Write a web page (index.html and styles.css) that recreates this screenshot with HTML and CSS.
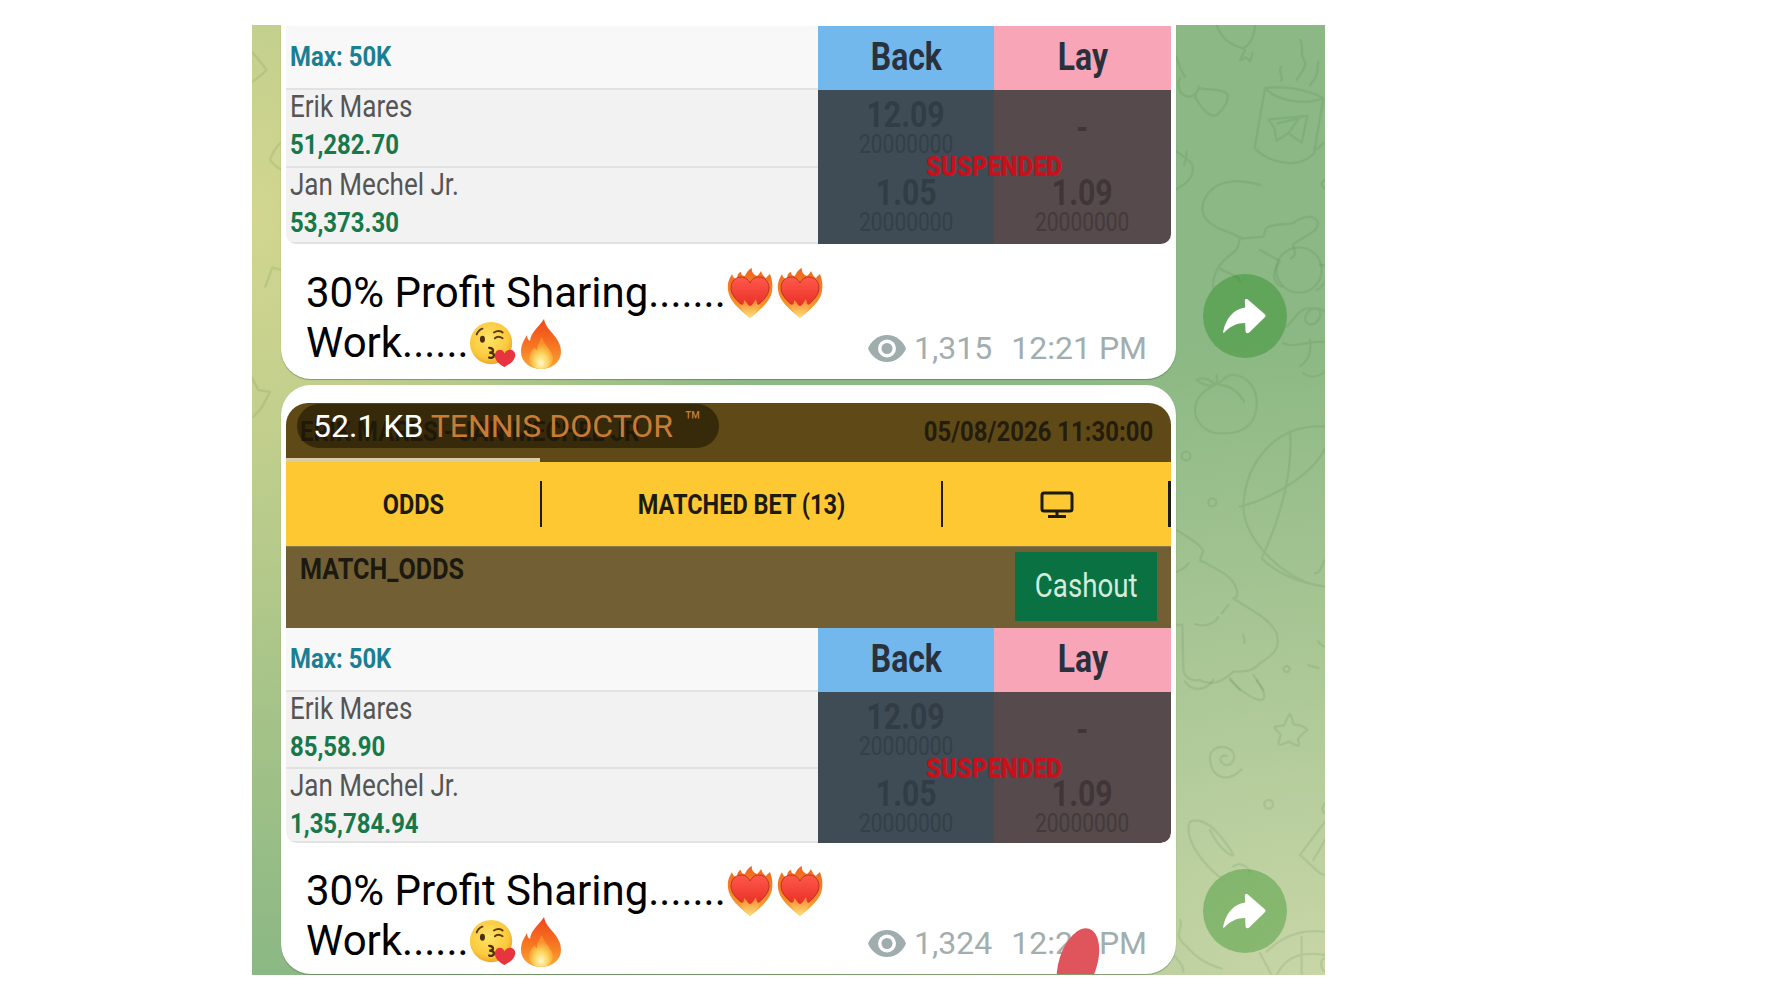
FILE: index.html
```html
<!DOCTYPE html>
<html lang="en">
<head>
<meta charset="utf-8">
<title>Tennis Doctor channel</title>
<link rel="stylesheet" href="styles.css">
</head>
<body>
<svg class="defs" aria-hidden="true">
  <defs>
    <linearGradient id="gFire" x1="0" y1="0" x2="0" y2="1"><stop offset="0" stop-color="#f2641e"/><stop offset=".7" stop-color="#f5902a"/><stop offset="1" stop-color="#fbc845"/></linearGradient>
    <linearGradient id="gHeart" x1="0" y1="0" x2="0" y2="1"><stop offset="0" stop-color="#ff5a4c"/><stop offset="1" stop-color="#e5261f"/></linearGradient>
    <linearGradient id="gCore" x1="0" y1="0" x2="0" y2="1"><stop offset="0" stop-color="#f7812a"/><stop offset="1" stop-color="#fde37a"/></linearGradient>
    <radialGradient id="gFace" cx=".45" cy=".4" r=".65"><stop offset="0" stop-color="#ffe368"/><stop offset=".7" stop-color="#fbc93c"/><stop offset="1" stop-color="#ec9a1d"/></radialGradient>
    <linearGradient id="gFlame" x1="0" y1="0" x2="0" y2="1"><stop offset="0" stop-color="#f0441c"/><stop offset=".6" stop-color="#f77c22"/><stop offset="1" stop-color="#fba834"/></linearGradient>
    <radialGradient id="gFlameCore" cx=".5" cy=".8" r=".6"><stop offset="0" stop-color="#fff7c8"/><stop offset=".5" stop-color="#fdd35a"/><stop offset="1" stop-color="#f8902a"/></radialGradient>
    <symbol id="fireheart" viewBox="0 0 48 50">
      <path fill="url(#gFire)" d="M24 50C14 42 3 33 2 22 1 14 4 10 6 6c1 4 3 5 5 5 0-4 2-7 4-7 0 3 2 4 4 4 1-3 4-7 7-8-1 4 2 7 5 8 2-2 3-3 4-5 1 3 3 6 5 7 1-2 3-3 4-4 2 6 3 10 2 17-1 10-12 19-22 27z"/>
      <path fill="url(#gHeart)" stroke="#a82a1c" stroke-width=".8" d="M24 44C12 34 5 28 5 20c0-7 5-11 10-11 4 0 7 2 9 6 2-4 5-6 9-6 5 0 10 4 10 11 0 8-7 14-19 24z"/>
      <path fill="url(#gCore)" d="M24 50c-4-4-9-8-10-14 3 2 4 0 4-4 3 2 4 6 6 6s4-4 6-7c1 4 1 7 4 5-1 6-6 10-10 14z"/>
    </symbol>
    <symbol id="kiss" viewBox="0 0 50 50">
      <circle cx="23" cy="24" r="22" fill="url(#gFace)"/>
      <path fill="none" stroke="#5a3a10" stroke-width="2" stroke-linecap="round" d="M8 15c1-3 3-5 6-6M26 13c3-2 7-2 9 0M27 19c2-2 5-2 8 0"/>
      <ellipse cx="14" cy="20" rx="2.6" ry="3.6" fill="#4a2f10"/>
      <path fill="none" stroke="#4a2f10" stroke-width="2.4" stroke-linecap="round" d="M21 29c3 0 4 1 4 3s-2 2-4 2c3 0 5 1 5 3s-3 3-5 2"/>
      <path fill="#e8343f" d="M37 49c-6-3-10-7-10-12 0-3 2-6 5-6 2 0 4 1 5 4 1-3 4-4 6-4 3 0 6 3 5 7-1 5-6 8-11 11z"/>
    </symbol>
    <symbol id="flame" viewBox="0 0 42 50">
      <path fill="url(#gFlame)" d="M24 0c1 6 4 9 9 15 5 6 8 11 8 18 0 10-9 17-20 17S1 43 1 33c0-7 3-12 6-17 0 3 1 5 3 6 1-9 8-13 14-22z"/>
      <path fill="url(#gFlameCore)" d="M22 18c1 5 4 7 7 12 3 4 4 7 4 10 0 6-6 10-12 10S9 46 9 40c0-6 3-9 6-12 0 2 1 3 2 3 0-5 3-9 5-13z"/>
    </symbol>
    <symbol id="share" viewBox="155 825 145 125">
      <path fill="#fff" d="M232 834c2 0 4 1 6 3l50 44c3 3 3 6 0 9l-46 45c-5 5-12 6-13-3l-1-25c-26 0-46 10-62 28-3 3-6 2-5-2 8-40 32-68 67-73l-1-20c0-4 2-6 5-6z"/>
    </symbol>
    <symbol id="eye" viewBox="0 0 38 27">
      <path fill="#a0adad" d="M19 0C10 0 3 6 0 13.500 3 21 10 27 19 27s16-6 19-13.500C35 6 28 0 19 0z"/>
      <circle cx="19" cy="13.500" r="9" fill="#fff"/>
      <circle cx="19" cy="13.500" r="5.500" fill="#a0adad"/>
    </symbol>
  </defs>
</svg>

<main class="frame">
  <svg class="doodles" viewBox="252 25 1073 950" aria-hidden="true">
    <g transform="translate(250 20) scale(.3333)">
      <path d="M0 90c20 20 35 40 50 60-15 15-35 30-50 40M90 370c-15 15-25 35-30 50 10 12 25 25 35 30M45 800c10-20 15-40 22-58 10 5 22 8 33 8M5 1070c5 15 15 30 20 40 12 3 25 5 35 5-10 20-20 40-30 55-8 8-14 14-20 20"/>
    </g>
    <g transform="translate(1170 20) scale(.3333)">
      <path d="M140 15c10 30 35 60 80 70 25-15 35-45 35-75M225 90c-5 10-10 20-15 32l18-10 12 12 8-25"/>
      <path d="M20 110c5 25 15 45 25 60M30 175c-10 20-5 50 25 55 20 0 30-15 30-30M90 205c20 5 60 0 80 15 10 15-5 45-30 65-20 10-45-20-60-45-10-15 0-30 10-35M20 395c15 10 30 20 45 35 10 25 0 55-50 80M50 395c0 15-3 28-8 40"/>
      <path d="M285 205c60-10 130 5 175 30l-28 165c-50 50-130 30-178-15zM285 205c40 40 120 50 175 30M460 370c-5 5-15 15-25 20M333 140c-10 20 10 30 0 42M390 60c15 20-5 40 15 65 5 20-15 35-25 55M445 125c-5 25 5 35-25 70"/>
      <path d="M295 298l117-10-17 80-40-28-35 22-8-40zM322 310l65-15-32 45M455 490c5-12 15-10 15-10M455 490c0 10 8 15 15 15"/>
      <path d="M270 495c-50-15-130-25-165 40-30 60 30 90 80 105 25 10 30 20 35 15l60-5 8-25c20-15 50-10 80-15 30-20 60-30 75-5 10 30-55 50-75 70 5 15 15 30-5 40M210 650c-5 30-5 40-30 55-40 30-55 70-50 100M270 690c15 10 40 20 60 35M150 745c15 15 50 15 60 40"/>
      <circle cx="387" cy="750" r="68"/>
      <path d="M325 730c-20 30-15 60 10 70M450 735h15M440 810c15-5 20-20 30-30M350 920c30-30 40-60 80-55 30 0 25 30 5 45-30 15-40-20-15-40 25-10 40 0 45 5M420 960c5 40-5 60-30 80M340 970c30 15 60-5 125-5"/>
    </g>
    <g transform="translate(1170 370) scale(.3333)">
      <path d="M135 45c-30 15-60 35-60 75 0 40 40 75 85 70 40 0 80-10 95-55 10-40 5-80-25-105-20-15-45-20-60-10-8 7-20 18-35 25zM135 45c-15 5-40 0-55-15 15-10 40-5 55 15zM135 45c10-8 5-20 5-30M150 45c30 0 60 25 72 50"/>
      <path d="M400 10c20 15 45 10 65-5M465 170c-150-10-240 110-245 240 0 100 130 230 245 240M210 410c110-30 220-100 255-175M360 185c10 130-30 260-85 380M275 565c30 30 90 70 190 85M465 570c-15 20-10 40-30 40"/>
      <circle cx="48" cy="258" r="13"/><circle cx="127" cy="397" r="12"/><circle cx="350" cy="897" r="9"/>
      <path d="M20 480c30 20 70 40 80 65-10 20-15 30 0 30 40 25 90 40 100 85 5 15 0 25-10 25 50 35 110 60 130 105 15 50-20 70-50 90-20 25-50 25-80 25-30 30-70 45-100 25-20 5-50-5-50-35l-3-130h-20M20 605c15-5 25-10 35-25M75 762c25 10 60 0 70-20M155 730l20-25M220 795c3 10 5 20 3 25M415 885c10 5 20 5 30 10M445 815c5 8 15 15 20 15M180 925l30 35M250 915l30 45"/>
    </g>
    <g transform="translate(1170 680) scale(.3333)">
      <path d="M180 0c30 30 60 55 90 60 25 0 10-30-10-60M45 5c20 30 60 30 85-5"/>
      <path d="M360 102c5 10 10 25 12 32 12 0 30 5 40 15-12 10-22 20-28 28 2 10 5 18 3 20-12 0-25-10-30-12-10 3-25 12-30 8-5-10 5-22 5-30-8-8-18-15-18-22 8-3 20-3 28-5 5-10 12-30 18-34z"/>
      <path d="M215 268c-40 40-90 30-95-30-5-40 50-50 70-20 10 25-15 50-35 30-10-15 5-25 15-20"/>
      <circle cx="296" cy="373" r="13"/>
      <path d="M60 425c40-15 80 20 125 90 20 30-35 0-65-65M60 425c-15 30 10 80 30 105 20 25 40 50 60 60M190 560c15-15 40-5 50 15M465 425l-75 100 60 55 15 5M465 480l-35 60M465 370c-10 10-10 25 0 30M290 815c60-60 120-65 175-60M320 885c30-60 80-70 145-60M395 770v115M270 820l35 65M465 835c-15 0-15 30 0 40M0 820c10 5 40 30 40 55M30 720c10 30-20 40 10 70 20 20 50 60 115 75"/>
    </g>
  </svg>

  <div class="chat">
    <article class="msg">
      <div class="bubble bubble-top">
        <div class="market market-a">
          <div class="cell head-name"><span class="sq sq-l">Max: 50K</span></div>
          <div class="cell head-back"><span class="sq">Back</span></div>
          <div class="cell head-lay"><span class="sq">Lay</span></div>
          <div class="cell runner"><span class="name sq sq-l">Erik Mares</span><span class="pl sq sq-l">51,282.70</span></div>
          <div class="cell odds back"><span class="price sq">12.09</span><span class="size sq">20000000</span></div>
          <div class="cell odds lay"><span class="price dash sq">-</span></div>
          <div class="cell runner"><span class="name sq sq-l">Jan Mechel Jr.</span><span class="pl sq sq-l">53,373.30</span></div>
          <div class="cell odds back"><span class="price sq">1.05</span><span class="size sq">20000000</span></div>
          <div class="cell odds lay"><span class="price sq">1.09</span><span class="size sq">20000000</span></div>
          <span class="suspended suspended-a"><span class="sq">SUSPENDED</span></span>
        </div>
        <div class="caption caption-a">
          <p class="caption-text">30% Profit Sharing.......<svg class="emoji-heart"><use href="#fireheart"/></svg><svg class="emoji-heart"><use href="#fireheart"/></svg><br>Work......<svg class="emoji-kiss"><use href="#kiss"/></svg><svg class="emoji-flame"><use href="#flame"/></svg></p>
          <div class="meta"><svg class="eye"><use href="#eye"/></svg><span class="views">1,315</span><span>12:21 PM</span></div>
        </div>
      </div>
      <button class="forward" aria-label="Forward"><svg class="share"><use href="#share"/></svg></button>
    </article>

    <article class="msg">
      <div class="bubble bubble-full">
        <div class="shot">
          <div class="match-head">
            <span class="match-title sq sq-l">ERIK MARES - JAN MECHEL JR</span>
            <span class="match-date sq sq-r">05/08/2026 11:30:00</span>
            <span class="pill"><span class="kb">52.1 KB</span> TENNIS DOCTOR <sup class="tm">™</sup></span>
            <span class="progress"></span>
          </div>
          <div class="tabs">
            <div class="tab tab-odds"><span class="sq">ODDS</span></div>
            <div class="tab tab-matched"><span class="sq">MATCHED BET (13)</span></div>
            <div class="tab tab-tv">
              <svg class="monitor" viewBox="0 0 34 27"><rect x="2" y="2" width="30" height="18" rx="2" fill="none" stroke="#1d1a10" stroke-width="3"/><path d="M17 20v4M8 25.500h18" stroke="#1d1a10" stroke-width="3" fill="none"/></svg>
            </div>
          </div>
          <div class="market-band">
            <span class="band-title sq sq-l">MATCH_ODDS</span>
            <span class="cashout"><span class="sq">Cashout</span></span>
          </div>
          <div class="market market-b">
            <div class="cell head-name"><span class="sq sq-l">Max: 50K</span></div>
            <div class="cell head-back"><span class="sq">Back</span></div>
            <div class="cell head-lay"><span class="sq">Lay</span></div>
            <div class="cell runner"><span class="name sq sq-l">Erik Mares</span><span class="pl sq sq-l">85,58.90</span></div>
            <div class="cell odds back"><span class="price sq">12.09</span><span class="size sq">20000000</span></div>
            <div class="cell odds lay"><span class="price dash sq">-</span></div>
            <div class="cell runner"><span class="name sq sq-l">Jan Mechel Jr.</span><span class="pl sq sq-l">1,35,784.94</span></div>
            <div class="cell odds back"><span class="price sq">1.05</span><span class="size sq">20000000</span></div>
            <div class="cell odds lay"><span class="price sq">1.09</span><span class="size sq">20000000</span></div>
            <span class="suspended suspended-b"><span class="sq">SUSPENDED</span></span>
          </div>
        </div>
        <div class="caption caption-b">
          <p class="caption-text">30% Profit Sharing.......<svg class="emoji-heart"><use href="#fireheart"/></svg><svg class="emoji-heart"><use href="#fireheart"/></svg><br>Work......<svg class="emoji-kiss"><use href="#kiss"/></svg><svg class="emoji-flame"><use href="#flame"/></svg></p>
          <div class="meta"><svg class="eye"><use href="#eye"/></svg><span class="views">1,324</span><span>12:21 PM</span></div>
        </div>
        <span class="blob"></span>
      </div>
      <button class="forward" aria-label="Forward"><svg class="share"><use href="#share"/></svg></button>
    </article>
  </div>
</main>
</body>
</html>
```
FILE: styles.css
```css
* { box-sizing: border-box; }
html, body { margin: 0; background: #fff; }
body { font-family: Roboto, "Liberation Sans", sans-serif; height: 998px; overflow: hidden; }
.defs { position: absolute; width: 0; height: 0; }

/* the source picture is stretched upright: tall, narrowed letters */
.sq { display: inline-block; transform: scaleX(.84); transform-origin: center; white-space: nowrap; }
.sq-l { transform-origin: left center; }
.sq-r { transform-origin: right center; }

.frame {
  position: relative;
  width: 1073px;
  height: 950px;
  margin: 25px 0 0 252px;
  overflow: hidden;
  background:
    radial-gradient(ellipse 520px 760px at 0 190px, #d2d68f 0%, rgba(210,214,143,.75) 30%, rgba(210,214,143,0) 100%),
    radial-gradient(ellipse 900px 640px at 100% 100%, #c9d6a7 0%, rgba(201,214,167,0) 100%),
    #8bb884;
}
.doodles {
  position: absolute;
  inset: 0;
  width: 100%;
  height: 100%;
  fill: none;
  stroke: rgba(60,115,60,.13);
  stroke-width: 7;
  stroke-linecap: round;
  stroke-linejoin: round;
}

.chat { position: relative; display: flex; flex-direction: column; gap: 6px; padding-left: 29px; }
.msg { display: flex; align-items: flex-end; gap: 27px; }

.bubble { position: relative; width: 895px; background: #fff; box-shadow: 0 1px 1px rgba(60,90,50,.45); }
.bubble-top { padding: 1px 5px 0 5px; border-radius: 0 0 30px 30px; }
.bubble-full { padding: 18px 5px 0 5px; border-radius: 30px; overflow: hidden; }

.forward {
  flex: none;
  display: flex;
  align-items: center;
  justify-content: center;
  width: 84px;
  height: 84px;
  margin-bottom: 21px;
  padding: 0;
  border: 0;
  border-radius: 50%;
  background: rgba(12,127,6,.33);
}
.share { width: 48px; height: 41px; }

/* market table */
.market { position: relative; display: grid; grid-template-columns: 532px 176px 177px; }
.market-a { grid-template-rows: 64px 78px 76px; border-radius: 0 0 10px 10px; overflow: hidden; }
.market-b { grid-template-rows: 64px 77px 74px; border-radius: 0 0 10px 10px; overflow: hidden; }
.cell { min-width: 0; }
.head-name {
  display: flex; align-items: center; padding: 0 0 2px 4px;
  background: #f8f8f8; border-bottom: 2px solid #e2e2e2;
  color: #1b7f94; font-size: 28.500px; font-weight: 700;
}
.head-back, .head-lay {
  display: flex; align-items: center; justify-content: center; padding-bottom: 3px;
  color: #29323c; font-size: 38px; font-weight: 700;
}
.head-back { background: #72b8ec; }
.head-lay { background: #f9a5b8; }
.runner {
  display: flex; flex-direction: column; align-items: flex-start; padding-left: 4px;
  background: #f2f2f2; border-bottom: 2px solid #e2e2e2;
}
.name { margin-bottom: 3px; color: #555; font-size: 31px; line-height: 33px; }
.pl { color: #17784a; font-size: 28.500px; font-weight: 700; line-height: 37px; }
.odds { display: flex; flex-direction: column; align-items: center; padding-top: 7px; }
.back { background: #3f4c56; color: #323c44; }
.lay { background: #574a4c; color: #403639; }
.price { font-size: 36px; font-weight: 700; line-height: 36px; }
.dash { margin-top: 13px; }
.size { margin-top: 1px; font-size: 25px; line-height: 22px; opacity: .8; }
.suspended {
  position: absolute; left: 641px; width: 133px; display: flex; justify-content: center;
  color: #c7111c; font-size: 28.500px; font-weight: 900; line-height: 26px;
}
.suspended-a { top: 128px; }
.suspended-b { top: 128px; }

/* caption */
.caption { display: flex; justify-content: space-between; align-items: flex-end; padding-left: 20px; padding-right: 24px; }
.caption-a { padding-top: 24px; padding-bottom: 11px; }
.caption-b { padding-top: 23px; padding-bottom: 8px; }
.caption-b .meta { margin-bottom: 3px; }
.caption-text { margin: 0; color: #000; font-size: 42px; line-height: 50px; white-space: nowrap; }
.caption-text svg { vertical-align: middle; margin-top: -15px; margin-bottom: -9px; }
.emoji-heart { width: 48px; height: 50px; margin-right: 2px; }
.caption-text .emoji-kiss { width: 48px; height: 48px; margin-top: -14px; margin-bottom: -10px; }
.caption-text .emoji-flame { width: 42px; height: 50px; margin-top: -14px; margin-bottom: -10px; margin-left: 3px; }
.meta { display: flex; align-items: center; color: #a2aeae; font-size: 32px; line-height: 40px; }
.eye { width: 38px; height: 27px; margin-right: 8px; }
.views { margin-right: 19px; }

/* screenshot header */
.shot { border-radius: 22px 22px 10px 10px; overflow: hidden; }
.match-head {
  position: relative; display: flex; align-items: center; justify-content: space-between;
  height: 59px; padding: 0 18px 3px 14px; background: #5f4a17;
  font-size: 28.500px; font-weight: 700; color: #241d0c;
}
.pill {
  position: absolute; left: 11px; top: 1px;
  height: 44px; padding: 0 18px 0 16px; border-radius: 22px;
  background: rgba(30,22,5,.62);
  color: #c87c35; font-size: 32px; font-weight: 400; line-height: 44px; white-space: nowrap;
}
.kb { color: #fff; }
.tm { margin-left: 3px; font-size: 28px; line-height: 0; vertical-align: 6px; }
.progress { position: absolute; left: 0; bottom: 0; width: 254px; height: 4px; background: #d8cda6; }

.tabs { display: flex; align-items: center; height: 84px; background: #fdc831; color: #1d1a10; font-size: 28px; font-weight: 700; }
.tab { display: flex; align-items: center; justify-content: center; height: 46px; }
.tab-odds { width: 254px; }
.tab-matched { width: 403px; border-left: 2px solid #1d1a10; border-right: 2px solid #1d1a10; }
.tab-tv { width: 228px; border-right: 3px solid #1d1a10; }
.monitor { width: 34px; height: 27px; margin-left: 2px; }

.market-band {
  display: flex; align-items: flex-start; justify-content: space-between;
  height: 82px; padding: 5px 14px 6px 14px; background: #726034; border-top: 1px solid #8a7a4a;
}
.band-title { color: #1c1a10; font-size: 30px; font-weight: 700; line-height: 34px; }
.cashout {
  display: flex; align-items: center; justify-content: center;
  width: 142px; height: 69px; padding-bottom: 3px; background: #0a7143; color: #d3ecdd; font-size: 33px;
}

.blob {
  position: absolute; right: 79px; bottom: -25px;
  width: 38px; height: 72px; border-radius: 50%;
  background: #e0545c; transform: rotate(18deg);
}
```
